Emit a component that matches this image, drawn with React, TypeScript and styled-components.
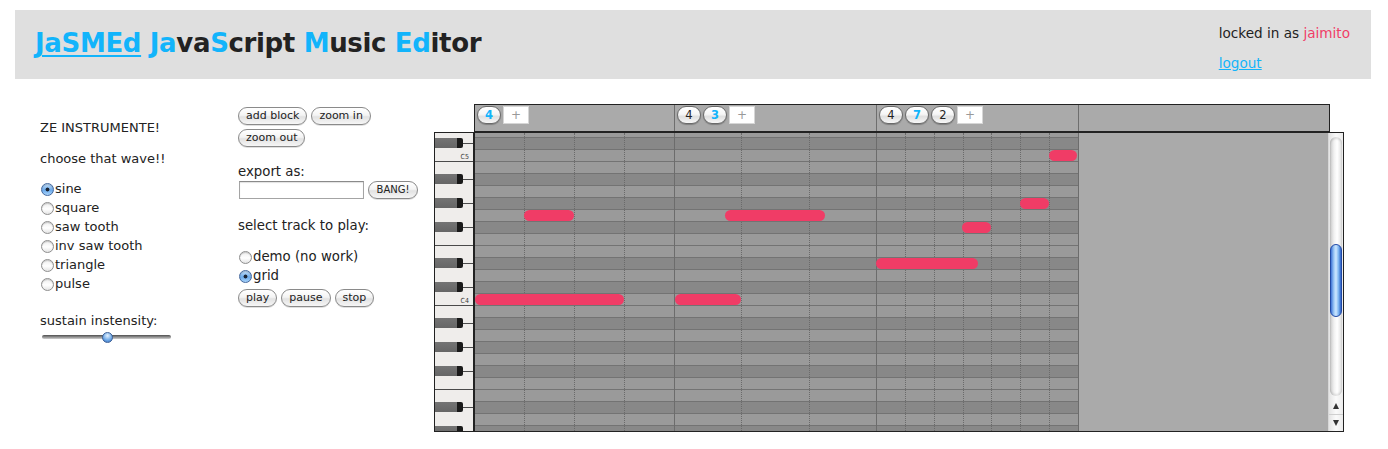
import React from 'react';
import styled, { createGlobalStyle } from 'styled-components';

const GlobalStyle = createGlobalStyle`
  html, body { margin: 0; padding: 0; background: #fff; }
  body { font-family: "DejaVu Sans", "Liberation Sans", sans-serif; color: #222; }
`;

const BLUE = '#12b4fb';
const PINK = '#f03c66';

const Page = styled.div`
  padding: 10px 17px 0 15px;
`;

const Header = styled.header`
  height: 69px;
  background: #dfdfdf;
  display: flex;
  justify-content: space-between;
  align-items: flex-start;
`;

const Title = styled.h1`
  margin: 0;
  padding: 17px 0 0 20px;
  font-size: 26px;
  line-height: 32px;
  font-weight: bold;
  letter-spacing: -0.35px;
  color: #222;
`;

const TitleLink = styled.a`
  color: ${BLUE};
  text-decoration: underline;
  text-decoration-thickness: 2px;
  text-underline-offset: 3px;
`;

const Hi = styled.span`
  color: ${BLUE};
`;

const UserBox = styled.div`
  display: flex;
  flex-direction: column;
  align-items: flex-start;
  gap: 11px;
  padding: 14px 21px 0 0;
  font-size: 13.6px;
  line-height: 19px;
`;

const UserName = styled.span`
  color: ${PINK};
`;

const Logout = styled.a`
  color: ${BLUE};
  text-decoration: underline;
`;

const Main = styled.div`
  display: flex;
  align-items: flex-start;
`;

const InstrumentPanel = styled.section`
  width: 198px;
  padding: 39px 0 0 25px;
  font-size: 13px;
  line-height: 19px;
  display: flex;
  flex-direction: column;
`;

const Label = styled.div<{ $gap?: number }>`
  margin-top: ${p => p.$gap ?? 0}px;
  white-space: nowrap;
`;

const RadioList = styled.div<{ $gap?: number }>`
  display: flex;
  flex-direction: column;
  margin-top: ${p => p.$gap ?? 0}px;
`;

const RadioItem = styled.label`
  display: flex;
  align-items: center;
  height: 19px;
  white-space: nowrap;
`;

const RadioDot = styled.span<{ $checked?: boolean }>`
  flex: none;
  box-sizing: border-box;
  width: 13px;
  height: 13px;
  margin: 1px 1px 0;
  border-radius: 50%;
  border: 1px solid ${p => (p.$checked ? '#44689e' : '#8e8e8e')};
  background: ${p =>
    p.$checked
      ? 'radial-gradient(circle at 50% 50%, #1b2433 0 1.6px, transparent 2.3px), linear-gradient(#c8e2fb, #6aa9ea 55%, #a8d3fb)'
      : 'linear-gradient(#eeeeee, #ffffff 55%, #e4e4e4)'};
  box-shadow: inset 0 1px 1px rgba(0, 0, 0, 0.18);
`;

const Slider = styled.div`
  position: relative;
  width: 129px;
  height: 12px;
  margin: 1px 0 0 2px;
  display: flex;
  align-items: center;
`;

const SliderTrack = styled.div`
  flex: 1;
  height: 4px;
  border-radius: 2px;
  background: linear-gradient(#4e4e4e, #8e8e8e 50%, #d0d0d0);
`;

const SliderThumb = styled.div`
  position: absolute;
  left: 60px;
  top: 1px;
  width: 11px;
  height: 11px;
  box-sizing: border-box;
  border-radius: 50%;
  border: 1px solid #3b5f96;
  background: radial-gradient(circle at 50% 30%, #e4f2ff, #6aa6e6 60%, #3466b6);
`;

const ControlPanel = styled.section`
  width: 196px;
  padding-top: 28px;
  font-size: 13.3px;
  line-height: 19px;
  display: flex;
  flex-direction: column;
`;

const ButtonRow = styled.div<{ $gap?: number }>`
  display: flex;
  flex-wrap: wrap;
  gap: 4px;
  width: 150px;
  margin-top: ${p => p.$gap ?? 0}px;
`;

const AquaButton = styled.button`
  box-sizing: border-box;
  height: 18px;
  padding: 0 7px;
  border: 1px solid #8a8a8a;
  border-radius: 9px;
  background: linear-gradient(#ffffff, #f4f4f4 45%, #e2e2e2 55%, #f6f6f6);
  box-shadow: 0 1px 0 rgba(0, 0, 0, 0.12);
  font-family: "DejaVu Sans", "Liberation Sans", sans-serif;
  font-size: 11px;
  line-height: 16px;
  color: #222;
`;

const ExportRow = styled.div`
  display: flex;
  align-items: center;
  gap: 4px;
  margin-left: 1px;
`;

const TextInput = styled.input`
  box-sizing: border-box;
  width: 125px;
  height: 18px;
  margin: 0;
  border: 1px solid #a4a4a4;
  border-top-color: #8a8a8a;
  background: #fff;
  box-shadow: inset 0 1px 1px rgba(0, 0, 0, 0.12);
`;

const BangButton = styled(AquaButton)`
  font-size: 10px;
  padding: 0 6px;
  width: 50px;
`;

const Editor = styled.div`
  margin-top: 25px;
  display: flex;
  flex-direction: column;
`;

const TabBar = styled.div`
  box-sizing: border-box;
  margin-left: 40px;
  width: 856px;
  height: 28px;
  border: 1px solid #222;
  background: #aaaaaa;
  display: flex;
`;

const TabSection = styled.div<{ $w: number }>`
  box-sizing: border-box;
  width: ${p => p.$w}px;
  border-right: 1px solid #6e6e6e;
  padding: 1px 2px;
  display: flex;
  gap: 2px;
`;

const TabPill = styled.span<{ $active?: boolean }>`
  box-sizing: border-box;
  width: 24px;
  height: 18px;
  border: 1px solid #6a6a6a;
  border-radius: 9px;
  background: linear-gradient(#ffffff, #f6f6f6 45%, #e0e0e0 60%, #f7f7f7);
  box-shadow: 0 1px 1px rgba(0, 0, 0, 0.25);
  display: flex;
  align-items: center;
  justify-content: center;
  font-size: 11.5px;
  font-weight: ${p => (p.$active ? 'bold' : 'normal')};
  color: ${p => (p.$active ? BLUE : '#222')};
`;

const AddBox = styled.span`
  box-sizing: border-box;
  width: 26px;
  height: 18px;
  background: #fff;
  border: 1px solid #d6d6d6;
  display: flex;
  align-items: center;
  justify-content: center;
  font-size: 12px;
  color: #999;
`;

const GridBox = styled.div`
  box-sizing: border-box;
  width: 910px;
  height: 300px;
  border: 1px solid #222;
  display: flex;
  background: #aaaaaa;
`;

const Piano = styled.div`
  box-sizing: border-box;
  width: 40px;
  flex: none;
  border-right: 2px solid #222;
  background: #efedeb;
  overflow: hidden;
`;

const RowStack = styled.div`
  margin-top: -7px;
  display: flex;
  flex-direction: column;
`;

const KeyRow = styled.div<{ $edge?: boolean }>`
  box-sizing: border-box;
  height: 12px;
  display: flex;
  align-items: flex-start;
  justify-content: flex-end;
  border-bottom: 1px solid ${p => (p.$edge ? '#4a4a4a' : 'transparent')};
`;

const BlackKey = styled.div`
  display: flex;
  width: 28px;
  height: 10px;
  flex: none;
`;

const BlackBody = styled.div`
  flex: 1;
  background: linear-gradient(#747474, #666666);
`;

const BlackCap = styled.div`
  width: 6px;
  background: #1a1a1a;
  border-radius: 0 2px 2px 0;
`;

const KeyLine = styled.div`
  flex: 1;
  height: 1px;
  margin-top: 5px;
  background: #4a4a4a;
`;

const KeyLabel = styled.span`
  font-size: 7px;
  line-height: 12px;
  padding: 1px 4px 0 0;
  color: #3a3a3a;
  font-family: "DejaVu Sans Condensed", "DejaVu Sans", sans-serif;
`;

const GridArea = styled.div`
  position: relative;
  flex: none;
  width: 604px;
  overflow: hidden;
`;

const GridRow = styled.div<{ $dark?: boolean }>`
  box-sizing: border-box;
  height: 12px;
  background: ${p => (p.$dark ? '#888888' : '#9a9a9a')};
  border-bottom: 1px solid #737373;
`;

const ColumnOverlay = styled.div`
  position: absolute;
  inset: 0;
  display: flex;
`;

const BlockCol = styled.div<{ $w: number }>`
  box-sizing: border-box;
  width: ${p => p.$w}px;
  border-right: 1px solid #6c6c6c;
  display: flex;
`;

const SubCol = styled.div`
  flex: 1;
  border-right: 1px dotted #6a6a6a;
  &:last-child { border-right: none; }
`;

const Note = styled.div`
  position: absolute;
  height: 11px;
  border-radius: 6px;
  background: ${PINK};
`;

const EmptyArea = styled.div`
  flex: 1;
  background: #aaaaaa;
`;

const Scrollbar = styled.div`
  width: 15px;
  flex: none;
  box-sizing: border-box;
  border-left: 1px solid #d8d8d8;
  background: linear-gradient(to right, #e4e4e4, #fafafa 50%, #ececec);
  display: flex;
  flex-direction: column;
`;

const Track = styled.div`
  position: relative;
  flex: 1;
  margin: 4px 1px 2px 1px;
  border-radius: 6px;
  background: linear-gradient(to right, #c9c9c9, #f2f2f2 35%, #ffffff 60%, #dedede);
  box-shadow: inset 0 2px 2px rgba(0, 0, 0, 0.12), inset 0 -2px 2px rgba(0, 0, 0, 0.1);
`;

const Thumb = styled.div`
  position: absolute;
  left: 0;
  right: 0;
  top: 107px;
  height: 73px;
  box-sizing: border-box;
  border: 1px solid #2149a6;
  border-radius: 6px;
  background: linear-gradient(to right, #3f74d6, #9fcbf7 30%, #cfe7ff 50%, #7db5f0 75%, #2e61c7);
`;

const ArrowBtn = styled.div<{ $down?: boolean }>`
  height: 8px;
  display: flex;
  align-items: center;
  justify-content: center;
  border-top: ${p => (p.$down ? '1px solid #cfcfcf' : 'none')};
  padding: 4px 0;
  &::before {
    content: '';
    border-left: 3.5px solid transparent;
    border-right: 3.5px solid transparent;
    ${p => (p.$down ? 'border-top: 6px solid #333;' : 'border-bottom: 6px solid #333;')}
  }
`;

const blocks = [
  { width: 200, cols: 4, tabs: [{ n: '4', active: true }] },
  { width: 202, cols: 3, tabs: [{ n: '4' }, { n: '3', active: true }] },
  { width: 202, cols: 7, tabs: [{ n: '4' }, { n: '7', active: true }, { n: '2' }] },
];

const rowNames = [
  'D5', 'C#5', 'C5', 'B4', 'A#4', 'A4', 'G#4', 'G4', 'F#4', 'F4', 'E4', 'D#4', 'D4',
  'C#4', 'C4', 'B3', 'A#3', 'A3', 'G#3', 'G3', 'F#3', 'F3', 'E3', 'D#3', 'D3', 'C#3',
];

const notes = [
  { row: 2, x: 574, w: 28 },
  { row: 6, x: 545, w: 29 },
  { row: 8, x: 487, w: 29 },
  { row: 11, x: 401, w: 102 },
  { row: 7, x: 49, w: 50 },
  { row: 7, x: 250, w: 100 },
  { row: 14, x: 0, w: 149 },
  { row: 14, x: 200, w: 66 },
];

const waves = ['sine', 'square', 'saw tooth', 'inv saw tooth', 'triangle', 'pulse'];

export default function App() {
  return (
    <>
      <GlobalStyle />
      <Page>
        <Header>
          <Title>
            <TitleLink href="#">JaSMEd</TitleLink> <Hi>Ja</Hi>va<Hi>S</Hi>cript <Hi>M</Hi>usic{' '}
            <Hi>Ed</Hi>itor
          </Title>
          <UserBox>
            <span>
              locked in as <UserName>jaimito</UserName>
            </span>
            <Logout href="#">logout</Logout>
          </UserBox>
        </Header>
        <Main>
          <InstrumentPanel>
            <Label>ZE INSTRUMENTE!</Label>
            <Label $gap={12}>choose that wave!!</Label>
            <RadioList $gap={11}>
              {waves.map((w, i) => (
                <RadioItem key={w}>
                  <RadioDot $checked={i === 0} />
                  {w}
                </RadioItem>
              ))}
            </RadioList>
            <Label $gap={18}>sustain instensity:</Label>
            <Slider>
              <SliderTrack />
              <SliderThumb />
            </Slider>
          </InstrumentPanel>
          <ControlPanel>
            <ButtonRow>
              <AquaButton>add block</AquaButton>
              <AquaButton>zoom in</AquaButton>
              <AquaButton>zoom out</AquaButton>
            </ButtonRow>
            <Label $gap={15}>export as:</Label>
            <ExportRow>
              <TextInput type="text" />
              <BangButton>BANG!</BangButton>
            </ExportRow>
            <Label $gap={17}>select track to play:</Label>
            <RadioList $gap={12}>
              <RadioItem>
                <RadioDot />
                demo (no work)
              </RadioItem>
              <RadioItem>
                <RadioDot $checked />
                grid
              </RadioItem>
            </RadioList>
            <ButtonRow $gap={4}>
              <AquaButton>play</AquaButton>
              <AquaButton>pause</AquaButton>
              <AquaButton>stop</AquaButton>
            </ButtonRow>
          </ControlPanel>
          <Editor>
            <TabBar>
              {blocks.map((b, i) => (
                <TabSection key={i} $w={b.width}>
                  {b.tabs.map((t, j) => (
                    <TabPill key={j} $active={t.active}>
                      {t.n}
                    </TabPill>
                  ))}
                  <AddBox>+</AddBox>
                </TabSection>
              ))}
            </TabBar>
            <GridBox>
              <Piano>
                <RowStack>
                  {rowNames.map(n => {
                    const black = n.includes('#');
                    const edge = !black && (n.startsWith('C') || n.startsWith('F'));
                    return (
                      <KeyRow key={n} $edge={edge}>
                        {black ? (
                          <>
                            <BlackKey>
                              <BlackBody />
                              <BlackCap />
                            </BlackKey>
                            <KeyLine />
                          </>
                        ) : n === 'C5' || n === 'C4' ? (
                          <KeyLabel>{n}</KeyLabel>
                        ) : null}
                      </KeyRow>
                    );
                  })}
                </RowStack>
              </Piano>
              <GridArea>
                <RowStack>
                  {rowNames.map(n => (
                    <GridRow key={n} $dark={n.includes('#')} />
                  ))}
                </RowStack>
                <ColumnOverlay>
                  {blocks.map((b, i) => (
                    <BlockCol key={i} $w={b.width}>
                      {Array.from({ length: b.cols }).map((_, j) => (
                        <SubCol key={j} />
                      ))}
                    </BlockCol>
                  ))}
                </ColumnOverlay>
                {notes.map((nt, i) => (
                  <Note key={i} style={{ left: nt.x, top: nt.row * 12 - 7, width: nt.w }} />
                ))}
              </GridArea>
              <EmptyArea />
              <Scrollbar>
                <Track>
                  <Thumb />
                </Track>
                <ArrowBtn />
                <ArrowBtn $down />
              </Scrollbar>
            </GridBox>
          </Editor>
        </Main>
      </Page>
    </>
  );
}
